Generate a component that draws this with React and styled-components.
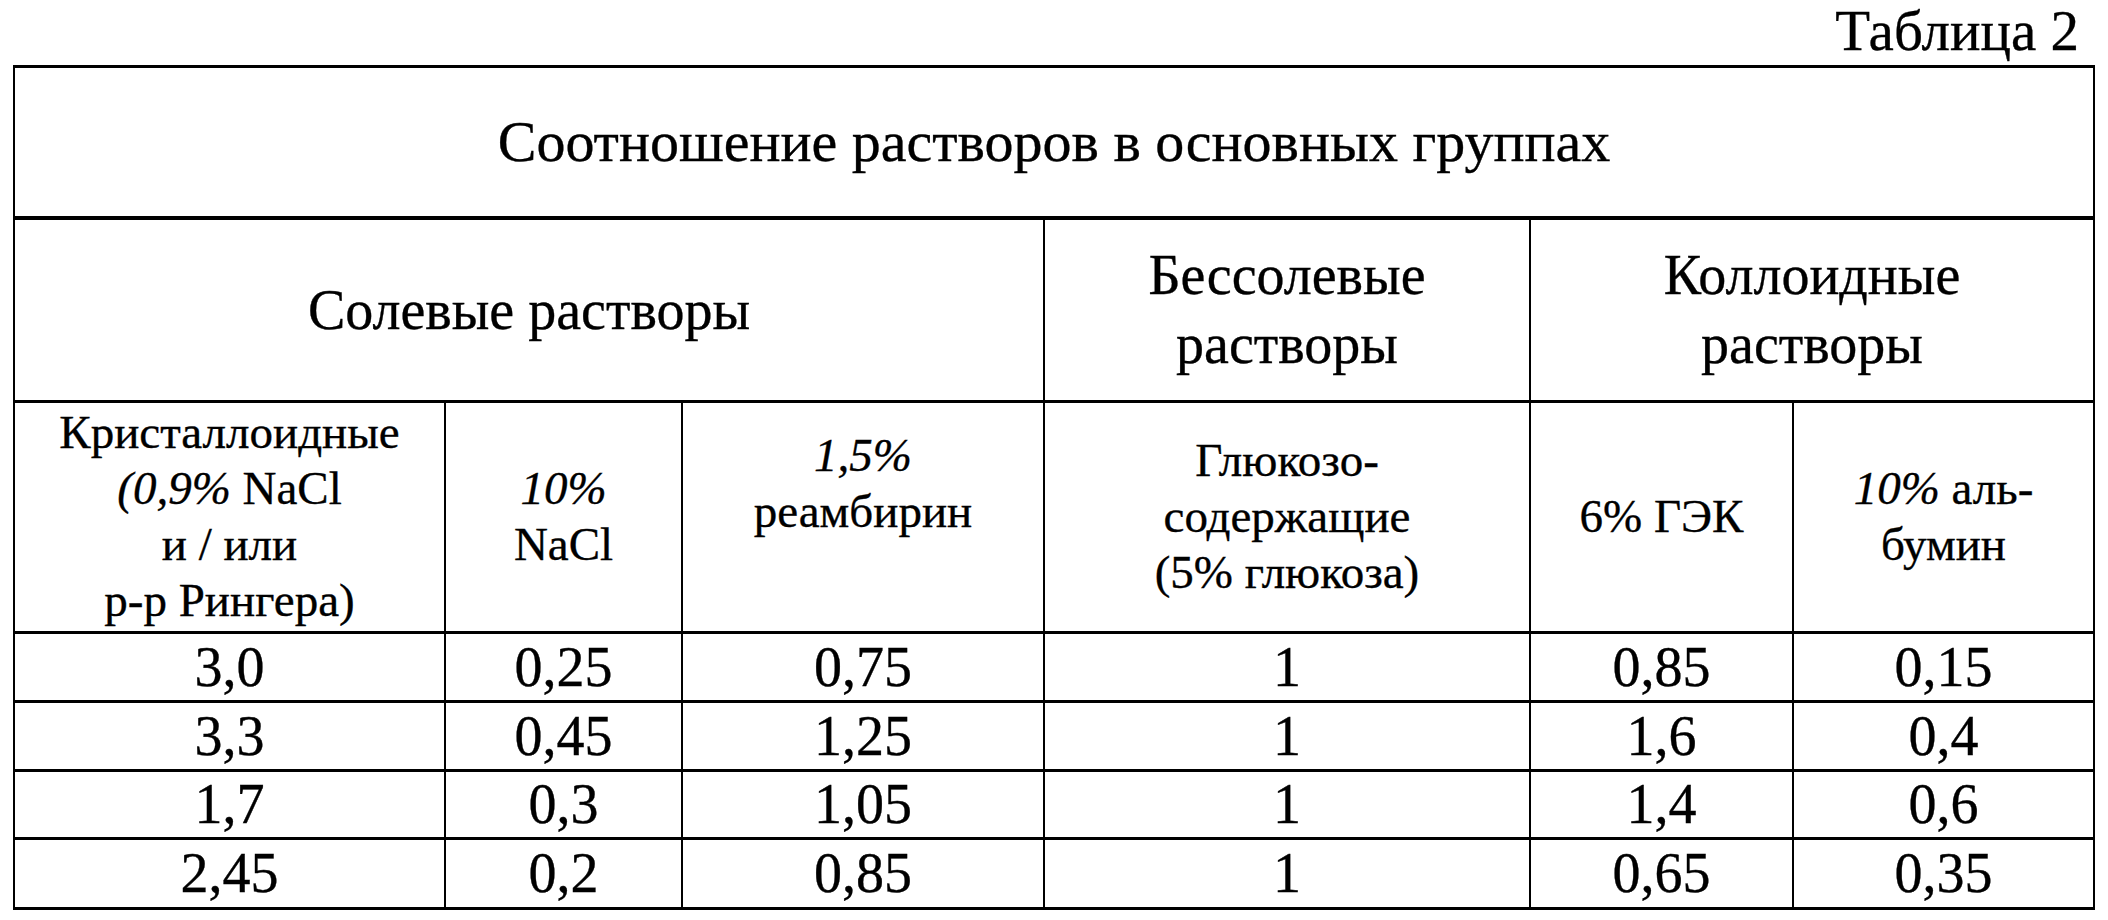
import React from "react";
import styled, { createGlobalStyle } from "styled-components";

const Global = createGlobalStyle`
  html, body { margin: 0; padding: 0; background: #fff; }
  body { font-family: "Liberation Serif", "Tinos", "Times New Roman", serif; color: #000; }
`;

const Page = styled.div`
  width: 2108px;
  height: 920px;
  box-sizing: border-box;
  padding: 2px 0 0 13px;
  overflow: hidden;
  font-family: "Liberation Serif", "Tinos", "Times New Roman", serif;
  -webkit-text-stroke: 0.35px #000;
`;

const Caption = styled.div`
  width: 2066px;
  text-align: right;
  font-size: 57px;
  line-height: 1;
  height: 63px;
`;

const Table = styled.div`
  display: grid;
  grid-template-columns: 431px 237px 362px 486px 263px 301px;
  grid-template-rows: 152px 183px 231px 69px 69px 68px 70px;
  width: max-content;
  border-top: 3px solid #000;
  border-left: 2px solid #000;
`;

const Cell = styled.div`
  grid-column: span ${(p) => p.$span || 1};
  box-sizing: border-box;
  border-right: 2px solid #000;
  border-bottom: ${(p) => p.$heavy ? 4 : 3}px solid #000;
  display: flex;
  flex-direction: column;
  align-items: center;
  justify-content: ${(p) => (p.$top ? "flex-start" : "center")};
  padding-top: ${(p) => p.$padTop || 0}px;
  text-align: center;
  font-size: ${(p) => p.$size || 56}px;
  line-height: ${(p) => p.$lh || 1.15};
`;

const Line = styled.span`
  display: block;
  white-space: nowrap;
`;

const Em = styled.i`
  font-style: italic;
`;

const rows = [
  ["3,0", "0,25", "0,75", "1", "0,85", "0,15"],
  ["3,3", "0,45", "1,25", "1", "1,6", "0,4"],
  ["1,7", "0,3", "1,05", "1", "1,4", "0,6"],
  ["2,45", "0,2", "0,85", "1", "0,65", "0,35"],
];

export default function App() {
  return (
    <>
      <Global />
      <Page>
        <Caption>Таблица 2</Caption>
        <Table>
          <Cell $span={6} $size={58} $heavy>
            <Line>Соотношение растворов в основных группах</Line>
          </Cell>

          <Cell $span={3}>
            <Line>Солевые растворы</Line>
          </Cell>
          <Cell $lh={1.23}>
            <Line>Бессолевые</Line>
            <Line>растворы</Line>
          </Cell>
          <Cell $span={2} $lh={1.23}>
            <Line>Коллоидные</Line>
            <Line>растворы</Line>
          </Cell>

          <Cell $size={47} $lh={1.19}>
            <Line>Кристаллоидные</Line>
            <Line>
              <Em>(0,9%</Em> NaCl
            </Line>
            <Line>и / или</Line>
            <Line>р-р Рингера)</Line>
          </Cell>
          <Cell $size={47} $lh={1.19}>
            <Line>
              <Em>10%</Em>
            </Line>
            <Line>NaCl</Line>
          </Cell>
          <Cell $size={47} $lh={1.19} $top $padTop={25}>
            <Line>
              <Em>1,5%</Em>
            </Line>
            <Line>реамбирин</Line>
          </Cell>
          <Cell $size={47} $lh={1.19}>
            <Line>Глюкозо-</Line>
            <Line>содержащие</Line>
            <Line>(5% глюкоза)</Line>
          </Cell>
          <Cell $size={47} $lh={1.19}>
            <Line>6% ГЭК</Line>
          </Cell>
          <Cell $size={47} $lh={1.19}>
            <Line>
              <Em>10%</Em> аль-
            </Line>
            <Line>бумин</Line>
          </Cell>

          {rows.map((r, i) =>
            r.map((v, j) => (
              <Cell key={`${i}-${j}`}>
                <Line>{v}</Line>
              </Cell>
            ))
          )}
        </Table>
      </Page>
    </>
  );
}
